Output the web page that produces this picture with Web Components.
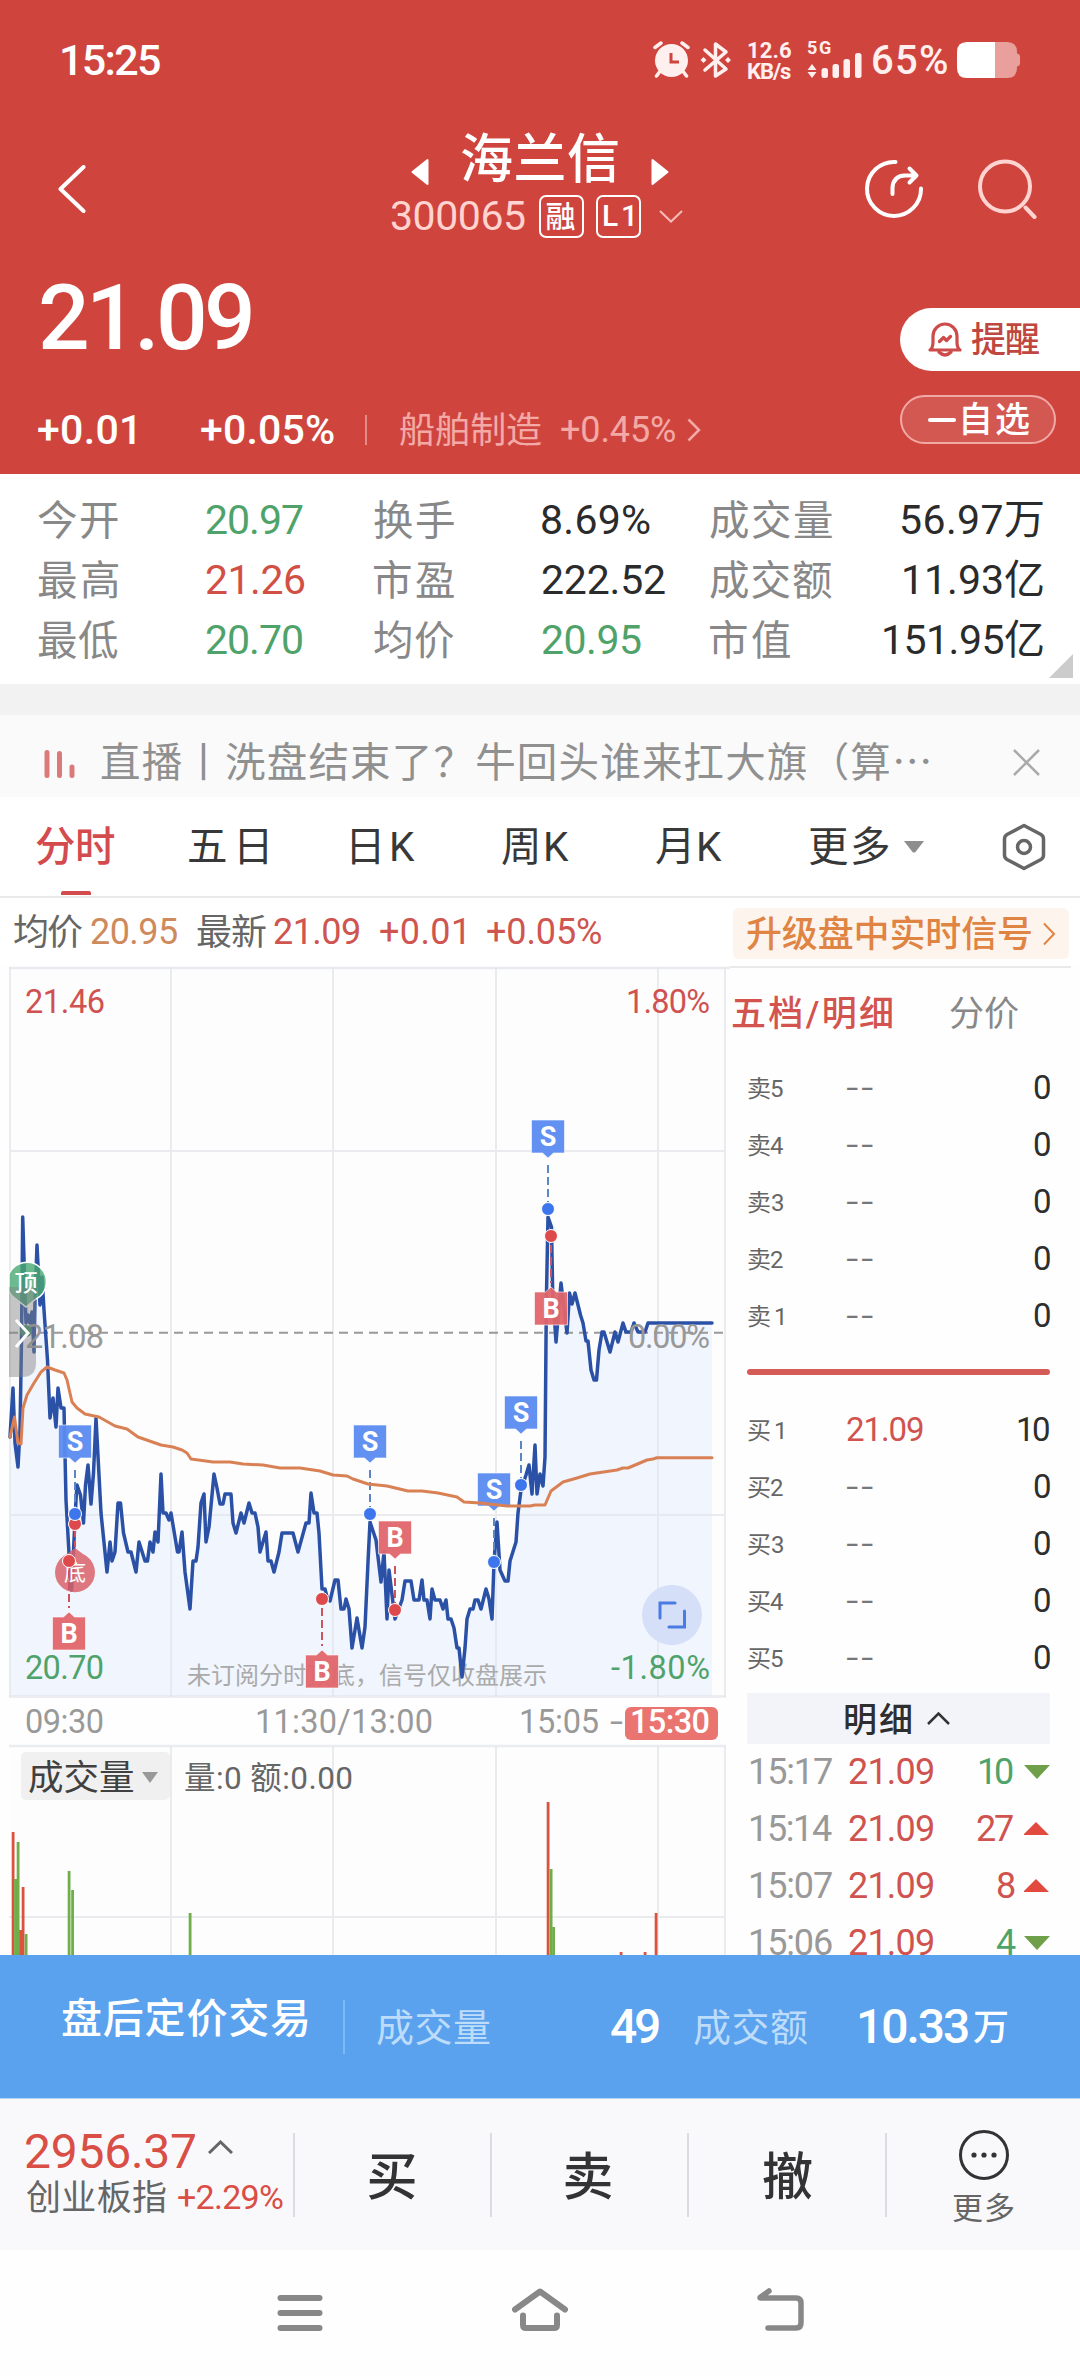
<!DOCTYPE html>
<html lang="zh-CN">
<head>
<meta charset="utf-8">
<title>海兰信 300065</title>
<style>
  html, body { margin: 0; padding: 0; }
  body {
    width: 1080px;
    height: 2376px;
    overflow: hidden;
    background: #fefefe;
    font-family: Roboto, "Noto Sans CJK SC", sans-serif;
  }
</style>
</head>
<body>
<stock-page></stock-page>
<script>
const ruler = document.createElement('canvas').getContext('2d');

function define(name, html, after) {
  const template = document.createElement('template');
  template.innerHTML = html;
  window.customElements.define(name, class extends HTMLElement {
    constructor() {
      super();
      this.attachShadow({mode: 'open'});
      this.shadowRoot.appendChild(template.content.cloneNode(true));
      if (after) after(this.shadowRoot, this);
    }
  });
}

// One line of text whose ink fills exactly w pixels, by letter spacing.
class FitText extends HTMLElement {
  constructor() {
    super();
    this.attachShadow({mode: 'open'});
    this.shadowRoot.innerHTML = `
      <style>
        :host { display: block; flex: none; white-space: nowrap; line-height: 1; }
        span { display: block; }
        .han { transform: translateY(.035em); }
      </style>
      <span><slot></slot></span>`;
  }

  connectedCallback() {
    const w = Number(this.getAttribute('w'));
    const text = this.textContent;
    const cs = getComputedStyle(this);
    ruler.font = `${cs.fontWeight} ${cs.fontSize} ${cs.fontFamily}`;
    const m = ruler.measureText(text);
    const ink = m.actualBoundingBoxLeft + m.actualBoundingBoxRight;
    const span = this.shadowRoot.querySelector('span');
    this.style.width = w + 'px';
    span.style.marginLeft = m.actualBoundingBoxLeft + 'px';
    span.classList.toggle('han', /^[\u4e00-\u9fff]/.test(text));
    if (text.length > 1) {
      span.style.letterSpacing = (w - ink) / (text.length - 1) + 'px';
    }
  }
}
window.customElements.define('fit-text', FitText);

define('status-bar', `
  <style>
    :host { display: flex; align-items: center; height: 120px; padding-left: 62px; color: #ffefee; }
    svg { flex: none; display: block; }
    .time { font-size: 43px; font-weight: 500; color: #fff; margin: 1px 493px 0 0; }
    .speed { display: flex; flex-direction: column; gap: 1px; margin: 2px 0 0 15px; font-size: 22px; font-weight: 700; }
    .speed fit-text { line-height: 20px; }
    .net { display: flex; flex-direction: column; margin-left: 16px; font-size: 18px; font-weight: 700; }
    .net fit-text { line-height: 17px; height: 13px; margin-top: -3px; }
    .pct { font-size: 40px; margin: 1px 0 0 11px; font-weight: 500; }
    .battery { margin-left: 10px; }
  </style>
  <fit-text class="time" w="98">15:25</fit-text>
  <svg width="80" height="38" viewBox="0 0 80 38">
    <g stroke="#ffefee" fill="none" stroke-linecap="round">
      <circle cx="18.500" cy="19.500" r="16.500" fill="#ffefee" stroke="none"/>
      <path d="M2 6.500L8 2M35 6.500L29 2M6.500 31L3.500 35M30.500 31L33.500 35" stroke-width="3.500"/>
      <path d="M18 12v9h8" stroke="#cf453e" stroke-width="3" stroke-linecap="butt"/>
      <path d="M52 9L73 28L62.500 35V3L73 11L52 29" stroke-width="3.500" stroke-linejoin="round"/>
    </g>
    <path d="M50.500 16l3 3-3 3-3-3zM75 16l3 3-3 3-3-3z" fill="#ffefee"/>
  </svg>
  <div class="speed"><fit-text w="43">12.6</fit-text><fit-text w="43">KB/s</fit-text></div>
  <div class="net">
    <fit-text w="24">5G</fit-text>
    <svg width="55" height="26" viewBox="0 0 55 26">
      <path d="M.5 18l4.500-6 4.500 6zM.5 20l4.500 6 4.500-6z" fill="#ffefee"/>
      <g fill="#ffefee">
        <rect x="14.500" y="16" width="6.500" height="10" rx="2.500"/>
        <rect x="25.500" y="12" width="6.500" height="14" rx="2.500"/>
        <rect x="36.500" y="7" width="6.500" height="19" rx="2.500"/>
        <rect x="48" y="1" width="6.500" height="25" rx="2.500"/>
      </g>
    </svg>
  </div>
  <fit-text class="pct" w="74">65%</fit-text>
  <svg class="battery" width="63" height="36" viewBox="0 0 63 36">
    <path d="M38 0h12q10 0 10 10v1.500q3 .5 3 3v6.500q0 3-3 3.500V26q0 10-10 10H38z" fill="#e9a09d"/>
    <path d="M38 0H10Q0 0 0 10v16q0 10 10 10h28z" fill="#fff"/>
  </svg>`);

define('stock-header', `
  <style>
    :host { display: block; height: 354px; color: #fff; }
    svg { display: block; flex: none; }
    .bar { display: grid; grid-template-columns: 391px 292px 1fr; height: 130px; }
    .back { margin: 45px 0 0 57px; }
    .name { display: flex; padding-left: 20px; height: 73px; align-items: center; }
    .name fit-text { font-size: 53px; font-weight: 500; margin: 3px 33px 0 33px; }
    .name svg { margin-top: 31px; }
    .code { display: flex; align-items: center; height: 46px; }
    .code > fit-text { font-size: 41px; color: #ffd3d0; margin-top: 1px; }
    .tag {
      box-sizing: border-box; height: 43px; width: 45px; border: 2px solid #fff; border-radius: 7px;
      display: flex; align-items: center; justify-content: center; margin-left: 12px;
      font-size: 30px; font-weight: 500;
    }
    .first { margin-left: 14px; }
    .down { margin-left: 18px; }
    .tools { display: flex; padding: 39px 0 0 181px; gap: 54px; }
    .body { display: flex; justify-content: space-between; }
    .price { font-size: 91px; font-weight: 500; line-height: 65px; margin: 36px 0 0 41px; }
    .change { display: flex; align-items: center; height: 30px; margin: 64px 0 0 38px; font-size: 41px; font-weight: 500; }
    .change i { width: 2px; height: 30px; background: #e58b87; margin: 0 33px 0 31px; }
    .sector { font-size: 36px; font-weight: 400; color: #f3aaa7; }
    .ops { display: flex; flex-direction: column; gap: 24px; width: 180px; padding-top: 58px; }
    .remind {
      box-sizing: border-box; display: flex; align-items: center; height: 63px; border-radius: 32px 0 0 32px;
      background: #fff; color: #c0473f; padding-left: 28px; font-size: 35px; font-weight: 500;
    }
    .remind fit-text { margin-left: 9px; }
    .fav {
      box-sizing: border-box; display: flex; align-items: center; width: 156px; height: 49px; border: 2px solid #f1a9a6;
      border-radius: 25px; background: #d35852; padding-left: 26px; font-size: 35px; font-weight: 500;
    }
    .fav i { width: 28px; height: 4px; border-radius: 2px; background: #fff; margin-right: 7px; }
  </style>
  <div class="bar">
    <svg class="back" width="30" height="48" viewBox="0 0 30 48"><path d="M26.500 2L3.500 24L26.500 46" fill="none" stroke="#fff" stroke-width="4" stroke-linecap="round" stroke-linejoin="round"/></svg>
    <div>
      <div class="name">
        <svg width="18" height="28" viewBox="0 0 18 28"><path d="M16.500 2v24L1.500 14z" fill="#fff" stroke="#fff" stroke-width="2" stroke-linejoin="round"/></svg>
        <fit-text w="156">海兰信</fit-text>
        <svg width="18" height="28" viewBox="0 0 18 28"><path d="M1.500 2v24L16.500 14z" fill="#fff" stroke="#fff" stroke-width="2" stroke-linejoin="round"/></svg>
      </div>
      <div class="code">
        <fit-text w="134">300065</fit-text>
        <div class="tag first"><fit-text w="30">融</fit-text></div>
        <div class="tag"><fit-text w="29">L1</fit-text></div>
        <svg class="down" width="24" height="13" viewBox="0 0 24 13"><path d="M1 1L12 11.500L23 1" fill="none" stroke="#f7bbb8" stroke-width="2"/></svg>
      </div>
    </div>
    <div class="tools">
      <svg width="60" height="60" viewBox="0 0 60 60">
        <g fill="none" stroke="#fff" stroke-width="4" stroke-linecap="round" stroke-linejoin="round">
          <path d="M31.500 3A27 27 0 1 0 57 29.500"/>
          <path d="M28.500 35V29Q29 17 41 16.500H52M45.500 9.500L52.500 16.500L45.500 23.500"/>
        </g>
      </svg>
      <svg width="60" height="60" viewBox="0 0 60 60">
        <g fill="none" stroke="#ffd3d0" stroke-width="4" stroke-linecap="round"><circle cx="27" cy="27.500" r="25"/><path d="M47.500 48.500L56.500 58"/></g>
      </svg>
    </div>
  </div>
  <div class="body">
    <div>
      <fit-text class="price" w="210">21.09</fit-text>
      <div class="change">
        <fit-text w="97">+0.01</fit-text>
        <fit-text w="133" style="margin-left:66px">+0.05%</fit-text>
        <i></i>
        <fit-text class="sector" w="141">船舶制造</fit-text>
        <fit-text class="sector" w="114" style="margin-left:20px">+0.45%</fit-text>
        <svg width="14" height="24" viewBox="0 0 14 24" style="margin-left:12px"><path d="M1.500 1.500L12 12L1.500 22.500" fill="none" stroke="#f3aaa7" stroke-width="2.500"/></svg>
      </div>
    </div>
    <div class="ops">
      <div class="remind">
        <svg width="34" height="36" viewBox="0 0 34 36">
          <g fill="none" stroke="#cc4c4c" stroke-width="3.200" stroke-linecap="round" stroke-linejoin="round">
            <path d="M2 28Q5 26 5 20V14A12 12 0 0 1 29 14V20Q29 26 32 28Z"/>
            <path d="M11 30Q17 36 23 30M11.500 19.500L15.500 15.500L18.500 18.500L22.500 14.500"/>
          </g>
        </svg>
        <fit-text w="68">提醒</fit-text>
      </div>
      <div class="fav"><i></i><fit-text w="66">自选</fit-text></div>
    </div>
  </div>`);

define('quote-grid', `
  <style>
    :host { display: block; height: 210px; background: #fff; position: relative; }
    .grid { display: grid; grid-template-columns: 168px 168px 168px 168px 1fr auto; grid-auto-rows: 60px; align-items: center; padding: 16px 37px 0 38px; }
    .k { font-size: 40.500px; color: #888; }
    .v { font-size: 41px; color: #2b2b2b; }
    .g { color: #4fa36a; }
    .r { color: #d14f45; }
    svg { position: absolute; right: 7px; bottom: 6px; }
  </style>
  <div class="grid"></div>
  <svg width="24" height="24"><path d="M24 0V24H0z" fill="#ccc"/></svg>`,
  root => {
    const rows = [
      ['今开', '20.97', 97, 'g', '换手', '8.69%', 108, '', '成交量', 122, '56.97万', 141],
      ['最高', '21.26', 99, 'r', '市盈', '222.52', 123, '', '成交额', 122, '11.93亿', 139],
      ['最低', '20.70', 96, 'g', '均价', '20.95', 99, 'g', '市值', 80, '151.95亿', 159]
    ];
    root.querySelector('.grid').innerHTML = rows.map(r => `
      <fit-text class="k" w="80">${r[0]}</fit-text><fit-text class="v ${r[3]}" w="${r[2]}">${r[1]}</fit-text>
      <fit-text class="k" w="80">${r[4]}</fit-text><fit-text class="v ${r[7]}" w="${r[6]}">${r[5]}</fit-text>
      <fit-text class="k" w="${r[9]}">${r[8]}</fit-text><fit-text class="v" w="${r[11]}" style="justify-self:end">${r[10]}</fit-text>`).join('');
  });

define('news-ticker', `
  <style>
    :host { display: block; height: 113px; background: #f2f2f2; overflow: hidden; }
    .row { display: flex; align-items: center; height: 82px; margin-top: 31px; padding: 13px 0 0 44px; box-sizing: border-box; background: #fafafa; }
    fit-text { font-size: 40.500px; color: #909090; margin: 0 84px 0 26px; }
    .bars { margin-top: 3px; }
  </style>
  <div class="row">
    <svg class="bars" width="31" height="28" viewBox="0 0 31 28"><path d="M3 2.500V25.500M15.500 3.500V25.500M28 17V25.500" stroke="#db7a7a" stroke-width="5" stroke-linecap="round"/></svg>
    <fit-text w="828">直播丨洗盘结束了？牛回头谁来扛大旗（算⋯</fit-text>
    <svg width="27" height="27" viewBox="0 0 27 27"><path d="M1 1L26 26M26 1L1 26" stroke="#aaa" stroke-width="2.500"/></svg>
  </div>`);

define('period-tabs', `
  <style>
    :host { display: block; box-sizing: border-box; height: 101px; background: #fff; border-bottom: 2px solid #e9e9e9; }
    .row { display: flex; align-items: center; height: 99px; padding-left: 36px; font-size: 40.500px; color: #383838; }
    .row > * { flex: none; }
    .on { position: relative; color: #d44b4e; font-weight: 500; }
    .on i { position: absolute; left: 25px; top: 65px; width: 30px; height: 4px; border-radius: 2px 2px 0 0; background: #d44b4e; }
  </style>
  <div class="row">
    <div class="on"><fit-text w="79">分时</fit-text><i></i></div>
    <fit-text w="78" style="margin-left:74px">五日</fit-text>
    <fit-text w="63" style="margin-left:85px">日K</fit-text>
    <fit-text w="67" style="margin-left:87px">周K</fit-text>
    <fit-text w="66" style="margin-left:87px">月K</fit-text>
    <fit-text w="80" style="margin-left:87px">更多</fit-text>
    <svg width="22" height="13" style="margin-left:14px"><path d="M1 1H21L12.500 12Q11 13 9.500 12z" fill="#8e8e8e"/></svg>
    <svg width="44" height="48" viewBox="0 0 44 48" style="margin-left:77px"><g fill="none" stroke="#666" stroke-width="3.500" stroke-linejoin="round"><path d="M22 2.500L39 11.500Q41.500 13 41.500 16V32Q41.500 35 39 36.500L22 45.500L5 36.500Q2.500 35 2.500 32V16Q2.500 13 5 11.500z"/><circle cx="22" cy="24" r="6.500"/></g></svg>
  </div>`);

define('price-info', `
  <style>
    :host { display: flex; align-items: center; height: 69px; padding-left: 14px; font-size: 36px; background: #fff; color: #cf5550; }
    :host > fit-text, fit-text { margin-top: -2px; }
    .k { color: #666; }
    .avg { color: #cf8a5c; }
    .up {
      display: flex; align-items: center; box-sizing: border-box; width: 336px; height: 51px; margin: 2px 0 0 132px; padding-left: 14px;
      border-radius: 6px; background: #fdf4ed; color: #e08443; font-weight: 500;
    }
    .up fit-text { margin-top: 0; }
  </style>
  <fit-text class="k" w="68">均价</fit-text>
  <fit-text class="avg" w="86" style="margin-left:9px">20.95</fit-text>
  <fit-text class="k" w="69" style="margin-left:20px">最新</fit-text>
  <fit-text w="85" style="margin-left:8px">21.09</fit-text>
  <fit-text w="84" style="margin-left:21px">+0.01</fit-text>
  <fit-text w="114" style="margin-left:23px">+0.05%</fit-text>
  <div class="up">
    <fit-text w="284">升级盘中实时信号</fit-text>
    <svg width="14" height="24" viewBox="0 0 14 24" style="margin-left:11px"><path d="M2 1.500L12 12L2 22.500" fill="none" stroke="#e08443" stroke-width="2"/></svg>
  </div>`);

const PRICE = `10,1437 13,1388 15,1443 18,1467 20,1430 21.500,1340 22.700,1217 26,1323 28,1315 30,1323 32,1312 34,1352 35,1300 37,1245
  40,1305 42,1277 44,1310 47.500,1360 50,1418 53,1398 56,1427 58,1388 61,1408 64,1408 66,1500 69,1553 71.700,1590 74,1540 76,1500
  77,1485 80.500,1495 83.500,1523 85.500,1485 88,1465 91,1504 93.500,1473 96,1418 101,1513 107,1572 110,1542 112,1561 115,1552
  118,1503 120.500,1503 123.500,1533 128,1552 131,1552 136,1572 139,1542 145,1561 147.500,1561 150,1542 153,1552 155,1532 158,1542
  161,1474 163,1513 166,1513 169,1520 171,1513 177.500,1552 179,1552 182,1532 185,1572 190,1609 193,1561 196,1561 198,1547
  201,1503 204,1494 206,1542 209,1527 214,1474 217,1488 220,1504 223,1504 225,1494 231,1494 233,1523 236,1533 241,1513 244,1523
  249,1503 252,1513 255,1513 258,1527 260,1552 266,1532 268,1561 271,1561 274,1572 279,1552 282,1533 293,1533 298,1552 306,1523
  309,1523 311,1493 314,1513 317,1513 319,1533 322,1589 325,1589 327,1597 330,1601 335,1580 338,1580 341,1609 344,1609 346,1599
  349,1609 352,1648 357,1618 362,1648 365,1627 368,1562 370,1522 376,1540 381,1582 384,1552 387,1619 389,1570 395,1619 402,1600
  405,1581 411,1581 414,1600 419,1600 422,1580 424,1600 427,1600 430,1619 432,1589 435,1600 440,1600 443,1609 446,1600 448,1619
  451,1619 454,1628 457,1648 459,1648 462,1677 465,1648 467,1619 470,1609 473,1609 475,1600 478,1600 481,1609 486,1589 489,1599
  492,1619 494,1562 497,1522 500,1570 505,1581 508,1581 510,1561 516,1542 518,1513 521,1490 526,1475 529,1465 532,1494 535,1445
  537,1494 540,1474 543,1486 545,1457 546,1340 546.500,1293 548,1217 551.500,1227 552.700,1293 556,1342 561,1283 567,1333
  569.500,1293 572,1304 575,1293 580.500,1315 583,1323 586,1341 588,1341 591,1370 594,1380 596.500,1380 599,1350 602,1332 604,1332
  610,1352 615,1332 618,1342 623,1323 626,1332 631,1332 634,1323 638,1332 645,1332 648,1323 712,1323`;

const AVERAGE = `10,1437 14.500,1417 18,1443 21,1444 23,1408 27,1395 34,1383 41,1372 47,1367 55,1370 64,1373 67,1380 72,1402 77,1408 85,1414
  99,1417 115,1426 127,1429 138,1437 161,1445 173,1447 182,1450 187,1453 191,1459 213,1462 230,1462 243,1464 263,1465 280,1468 300,1468
  320,1471 333,1475 347,1476 353,1479 368,1484 387,1486 408,1491 422,1491 438,1493 457,1497 464,1502 480,1503 507,1506 530,1506
  535,1505 545,1505 551,1491 563,1482 577,1478 590,1474 617,1470 623,1468 628,1468 647,1460 653,1459 657,1457.700 712,1457.700`;

// letter, x, dot y, top of the flag
const SIGNALS = [
  ['S', 548, 1209, 1120],
  ['B', 551, 1236, 1291],
  ['S', 521, 1485, 1396],
  ['S', 494, 1562, 1473],
  ['S', 370, 1514, 1425],
  ['B', 395, 1610, 1521],
  ['B', 322, 1599, 1654],
  ['B', 69, 1561, 1616],
  ['S', 75, 1514, 1425]
];

const VOLUME = [
  [13, 1832, 'r'], [15.5, 1879, 'g'], [18, 1842, 'g'], [20.5, 1930, 'r'], [23, 1887, 'r'], [26, 1934, 'g'],
  [69, 1871, 'g'], [72.5, 1890, 'g'], [190, 1913, 'g'], [548, 1802, 'r'], [551, 1869, 'g'], [553.5, 1927, 'g'],
  [621, 1952, 'r'], [645, 1952, 'r'], [656, 1913, 'r']
];

function flag([letter, x, dot, top]) {
  const above = top < dot;
  const fill = letter === 'S' ? '#5b8bf1' : '#e0666b';
  const line = letter === 'S' ? '#5a86c4' : '#d0525c';
  const tip = above
    ? `M${x - 16.5} ${top}h33v33h-11l-5.500 5l-5.500-5h-11z`
    : `M${x - 16.5} ${top + 34}h33v-33h-11l-5.500-5l-5.500 5h-11z`;
  const from = above ? top + 45 : dot + 9;
  const to = above ? dot - 5 : top - 8;
  return `
    <path d="M${x} ${from}V${to}" stroke="${line}" stroke-width="2" stroke-dasharray="8 4"/>
    <path d="${tip}" fill="${fill}" fill-opacity=".95" stroke="#fff" stroke-opacity=".6"/>
    <text x="${x}" y="${top + (above ? 26 : 27)}" text-anchor="middle" font-size="27" font-weight="700" fill="#fff">${letter}</text>
    <circle cx="${x}" cy="${dot}" r="6.500" fill="${letter === 'S' ? '#3d76ec' : '#de4a4c'}" stroke="#fff"/>`;
}

define('minute-chart', `
  <style>
    :host { display: block; width: 730px; height: 989px; }
    svg { display: block; }
  </style>
  <svg width="730" height="989" viewBox="0 966 730 989">
    <rect x="10" y="968" width="715" height="728" fill="#fdfdfd"/>
    <rect x="10" y="1747" width="715" height="210" fill="#fdfdfd"/>
    <polygon class="area" fill="#f0f5fe"/>
    <g stroke="#dfe2e8" stroke-opacity=".65" stroke-width="2" fill="none">
      <path d="M9 968H730M9 1696.500H726M9 1746H726" stroke-width="2.500"/>
      <path d="M10 967V1697M171 967V1697M333 967V1697M496 967V1697M658 967V1697M725 967V1697M10 1151H725M10 1515H725"/>
      <path d="M171 1746V1955M333 1746V1955M496 1746V1955M658 1746V1955M725 1746V1955M9 1917H725"/>
    </g>
    <path d="M9 1332.700H725" stroke="#999" stroke-width="2" stroke-dasharray="9 6"/>
    <g class="volume"></g>
    <g font-size="32.500">
      <g fill="#cf5150">
        <text x="25" y="1013" textLength="80">21.46</text>
        <text x="626" y="1013" textLength="84">1.80%</text>
      </g>
      <g fill="#4fa36a">
        <text x="25" y="1679" textLength="79">20.70</text>
        <text x="611" y="1679" textLength="99">-1.80%</text>
      </g>
    </g>
    <text x="187" y="1684" font-size="24" fill="#aaa">未订阅分时顶底，信号仅收盘展示</text>
    <polyline class="price" fill="none" stroke="#2b51a6" stroke-width="3.500" stroke-linejoin="round" stroke-linecap="round"/>
    <g font-size="32.500" fill="#999">
      <text x="25" y="1348" textLength="79">21.08</text>
      <text x="628" y="1348" textLength="82">0.00%</text>
      <text x="25" y="1733" textLength="79">09:30</text>
      <text x="255" y="1733" textLength="178">11:30/13:00</text>
      <text x="519" y="1733" textLength="80">15:05</text>
      <text x="610" y="1733" textLength="13" lengthAdjust="spacingAndGlyphs">-</text>
    </g>
    <circle cx="75" cy="1524" r="6.500" fill="#de4a4c" stroke="#fff"/>
    <path d="M75 1531V1548" stroke="#d0525c" stroke-width="2" stroke-dasharray="6 4"/>
    <path d="M67 1554L75 1548L83 1554A20 20 0 1 1 67 1554z" fill="#d9626b" fill-opacity=".85"/>
    <text x="75" y="1580" text-anchor="middle" font-size="22" fill="#fff">底</text>
    <g class="signals"></g>
    <polyline class="average" fill="none" stroke="#d98155" stroke-width="3" stroke-linejoin="round" stroke-linecap="round"/>
    <circle cx="26" cy="1331" r="6" fill="#3f9068"/>
    <path d="M9 1274A19.500 19.500 0 1 1 36 1299L26 1307L16 1299Q11 1296 9 1291z" fill="#4aa973" fill-opacity=".8" stroke="#fff" stroke-width="1.500"/>
    <path d="M9 1287H36V1363Q36 1377 22 1377H9z" fill="#808080" fill-opacity=".45"/>
    <text x="26" y="1291" text-anchor="middle" font-size="23" font-weight="500" fill="#fff">顶</text>
    <path d="M16 1320L28 1333L16 1347" fill="none" stroke="#fff" stroke-width="3"/>
    <circle cx="672" cy="1615" r="30" fill="#d5dff8"/>
    <path d="M675 1603H660V1618M669 1627H684.500V1611" fill="none" stroke="#4a7ae2" stroke-width="3" stroke-linecap="round"/>
    <rect x="625" y="1707" width="93" height="33" rx="6" fill="#ea7470"/>
    <text x="630" y="1733" font-size="32.500" font-weight="500" fill="#fff" textLength="80">15:30</text>
    <rect x="21" y="1752" width="149" height="48" rx="5" fill="#f0f0f0"/>
    <text x="28" y="1790" font-size="35.500" fill="#404040">成交量</text>
    <path d="M142 1772h16l-8 11z" fill="#999"/>
    <text x="184" y="1789" font-size="31.500" fill="#666" textLength="169">量:0 额:0.00</text>
  </svg>`,
  root => {
    root.querySelector('.price').setAttribute('points', PRICE);
    root.querySelector('.area').setAttribute('points', `${PRICE} 712,1696 10,1696`);
    root.querySelector('.average').setAttribute('points', AVERAGE);
    root.querySelector('.signals').innerHTML = SIGNALS.map(flag).join('');
    root.querySelector('.volume').innerHTML = VOLUME.map(([x, y, c]) =>
      `<rect x="${x - 1.3}" y="${y}" width="2.800" height="${1956 - y}" fill="${c === 'r' ? '#d9533f' : '#6fae49'}"/>`).join('');
  });

define('order-book', `
  <style>
    :host { display: block; width: 350px; height: 989px; overflow: hidden; }
    .tabs { display: flex; align-items: center; box-sizing: border-box; height: 93px; width: 341px; border-top: 2px solid #e9e9e9; padding-left: 2px; font-size: 35px; color: #888; }
    .on { color: #d3534f; font-weight: 500; margin-right: 58px; }
    .row { display: grid; grid-template-columns: 99px 1fr auto; align-items: center; height: 57px; margin: 0 31px 0 18px; font-size: 33px; color: #2e2e2e; }
    .k { font-size: 24px; color: #666; }
    .none { font-size: 44px; font-weight: 300; color: #777; height: 44px; }
    .r { color: #d05350; }
    .g { color: #4fa36a; }
    hr { width: 303px; height: 6px; border: 0; border-radius: 3px; background: #d45b56; margin: 25px 0 26px 17px; }
    .detail { display: flex; align-items: center; height: 51px; width: 303px; margin: 7px 0 0 17px; background: #f3f4f9; font-size: 34px; color: #2e2e2e; }
    .detail fit-text { margin: 0 16px 0 98px; font-weight: 500; }
    .trades { margin-top: -1px; }
    .trade { display: flex; align-items: center; height: 57px; margin-left: 21px; font-size: 36px; color: #999; }
    .qty { width: 80px; display: flex; justify-content: flex-end; margin-right: 11px; }
  </style>
  <div class="tabs"><fit-text class="on" w="160">五档/明细</fit-text><fit-text w="68">分价</fit-text></div>
  <div class="asks"></div>
  <hr>
  <div class="bids"></div>
  <div class="detail"><fit-text w="66">明细</fit-text><svg width="23" height="13" viewBox="0 0 23 13"><path d="M1 12L11.500 1.500L22 12" fill="none" stroke="#333" stroke-width="2.500"/></svg></div>
  <div class="trades"></div>`,
  root => {
    const level = (label, price, qty, w) => `
      <div class="row"><fit-text class="k" w="35">${label}</fit-text>
      ${price ? `<fit-text class="r" w="76">${price}</fit-text>` : '<fit-text class="none" w="26">--</fit-text>'}
      <fit-text w="${w}">${qty}</fit-text></div>`;
    root.querySelector('.asks').innerHTML = [5, 4, 3, 2, 1].map(n => level('卖' + n, '', '0', 15)).join('');
    root.querySelector('.bids').innerHTML = [1, 2, 3, 4, 5].map(n =>
      n === 1 ? level('买1', '21.09', '10', 31) : level('买' + n, '', '0', 15)).join('');
    root.querySelector('.trades').innerHTML = [
      ['15:17', '10', 33, 'g'], ['15:14', '27', 36, 'r'], ['15:07', '8', 16, 'r'], ['15:06', '4', 17, 'g']
    ].map(([time, qty, w, c]) => `
      <div class="trade"><fit-text w="81">${time}</fit-text>
      <fit-text class="r" w="84" style="margin-left:17px">21.09</fit-text>
      <div class="qty ${c}"><fit-text w="${w}">${qty}</fit-text></div>
      <svg width="26" height="14"><path d="${c === 'g' ? 'M0 0H26L13 14z' : 'M-1 13H25L12 0z'}" fill="${c === 'g' ? '#6f9f49' : '#e24a40'}"/></svg></div>`).join('');
  });

define('after-hours', `
  <style>
    :host { display: flex; align-items: center; box-sizing: border-box; height: 144px; padding-left: 62px; background: #5aa1ee; border-bottom: 1px solid #b5d5f7; color: #fff; font-size: 38px; }
    .t { font-size: 41px; font-weight: 500; margin-top: -17px; }
    i { width: 2px; height: 54px; background: #7fb8f3; margin: 0 32px 0 35px; }
    .k { color: #bcdcfa; }
    .v { font-size: 48px; font-weight: 500; }
    .unit { font-size: 36px; font-weight: 500; }
  </style>
  <fit-text class="t" w="246">盘后定价交易</fit-text>
  <i></i>
  <fit-text class="k" w="113">成交量</fit-text>
  <fit-text class="v" w="48" style="margin-left:121px">49</fit-text>
  <fit-text class="k" w="113" style="margin-left:35px">成交额</fit-text>
  <fit-text class="v" w="109" style="margin-left:52px">10.33</fit-text>
  <fit-text class="unit" w="35" style="margin-left:5px">万</fit-text>`);

define('trade-bar', `
  <style>
    :host { display: grid; grid-template-columns: 293px 197px 197px 198px 1fr; height: 151px; background: #f9f9fc; color: #333; }
    .index { padding: 30px 0 0 26px; }
    .line { display: flex; align-items: center; height: 46px; color: #d94e45; font-size: 48px; }
    .sub { font-size: 34px; height: 44px; }
    .sub .k { color: #666; font-size: 35px; margin-right: 12px; }
    .line svg { margin: -10px 0 0 13px; }
    .act { display: flex; align-items: center; justify-content: center; font-size: 51px; font-weight: 500; border-left: 2px solid #dcdce0; margin: 34px 0; height: 84px; }
    .more { display: flex; flex-direction: column; align-items: center; gap: 11px; box-sizing: border-box; font-size: 31px; color: #666; border-left: 2px solid #dcdce0; margin-top: 34px; height: 84px; }
    .more svg { margin-top: -4px; flex: none; }
  </style>
  <div class="index">
    <div class="line"><fit-text w="169">2956.37</fit-text><svg width="25" height="14" viewBox="0 0 25 14"><path d="M1 13L12.500 2L24 13" fill="none" stroke="#666" stroke-width="3"/></svg></div>
    <div class="line sub"><fit-text class="k" w="140">创业板指</fit-text><fit-text w="105">+2.29%</fit-text></div>
  </div>
  <div class="act"><fit-text w="48">买</fit-text></div>
  <div class="act"><fit-text w="48">卖</fit-text></div>
  <div class="act"><fit-text w="48">撤</fit-text></div>
  <div class="more">
    <svg width="52" height="52" viewBox="0 0 52 52"><circle cx="26" cy="26" r="23.500" fill="none" stroke="#333" stroke-width="3"/><g fill="#333"><circle cx="16" cy="26" r="2.600"/><circle cx="26" cy="26" r="2.600"/><circle cx="36" cy="26" r="2.600"/></g></svg>
    <fit-text w="61">更多</fit-text>
  </div>`);

define('nav-bar', `
  <style>
    :host { display: flex; height: 126px; box-sizing: border-box; padding: 37px 0 0 276px; gap: 188px; background: #fefefe; }
    svg { flex: none; }
  </style>
  <svg width="48" height="46" viewBox="0 0 48 46"><path d="M4.500 11H43.500M4.500 26H43.500M4.500 41H43.500" stroke="#888" stroke-width="6" stroke-linecap="round"/></svg>
  <svg width="56" height="46" viewBox="0 0 56 46"><path d="M3 22.500L28 4.500L53 22.500M11 28.500V38Q11 41 14 41H42Q45 41 45 38V28.500" fill="none" stroke="#888" stroke-width="6" stroke-linecap="round" stroke-linejoin="round"/></svg>
  <svg width="50" height="46" viewBox="0 0 50 46"><path d="M13 4L4 10.500Q4 11 5 11H40Q45 11 45 16V36Q45 41 40 41H12" fill="none" stroke="#888" stroke-width="5.500" stroke-linecap="round" stroke-linejoin="round"/></svg>`);

define('stock-page', `
  <style>
    :host { display: block; width: 1080px; }
    .top { background: #cf453e; }
    .chart { display: flex; height: 989px; background: #fefefe; margin-top: -1px; }
  </style>
  <div class="top"><status-bar></status-bar><stock-header></stock-header></div>
  <quote-grid></quote-grid>
  <news-ticker></news-ticker>
  <period-tabs></period-tabs>
  <price-info></price-info>
  <div class="chart"><minute-chart></minute-chart><order-book></order-book></div>
  <after-hours></after-hours>
  <trade-bar></trade-bar>
  <nav-bar></nav-bar>`);
</script>
</body>
</html>
